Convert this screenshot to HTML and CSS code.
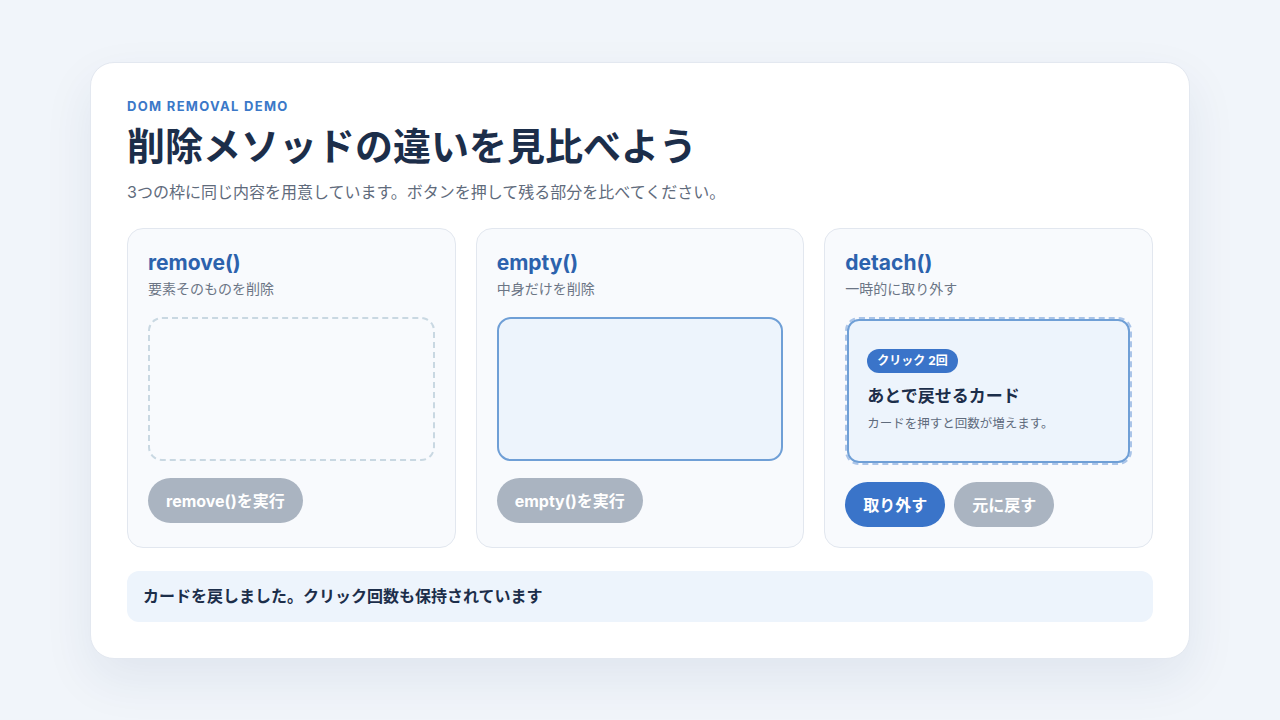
FILE: index.html
```html
<!DOCTYPE html>
<html lang="ja">
<head>
    <meta charset="UTF-8">
    <meta name="viewport" content="width=device-width, initial-scale=1.0">
    <title>DOM Removal Demo</title>
    <link rel="stylesheet" href="styles.css">
</head>
<body>
    <div class="panel">
        <p class="eyebrow">DOM REMOVAL DEMO</p>
        <h1>削除メソッドの違いを見比べよう</h1>
        <p class="lead">3つの枠に同じ内容を用意しています。ボタンを押して残る部分を比べてください。</p>

        <div class="methods">
            <div class="method">
                <h2>remove()</h2>
                <p class="method-desc">要素そのものを削除</p>
                <div class="slot slot-removed"></div>
                <div class="actions">
                    <button class="btn btn-off">remove()を実行</button>
                </div>
            </div>

            <div class="method">
                <h2>empty()</h2>
                <p class="method-desc">中身だけを削除</p>
                <div class="slot slot-emptied"></div>
                <div class="actions">
                    <button class="btn btn-off">empty()を実行</button>
                </div>
            </div>

            <div class="method">
                <h2>detach()</h2>
                <p class="method-desc">一時的に取り外す</p>
                <div class="slot slot-holder">
                    <div class="demo-card">
                        <span class="badge">クリック 2回</span>
                        <h3>あとで戻せるカード</h3>
                        <p>カードを押すと回数が増えます。</p>
                    </div>
                </div>
                <div class="actions">
                    <button class="btn btn-primary">取り外す</button>
                    <button class="btn btn-off">元に戻す</button>
                </div>
            </div>
        </div>

        <div class="status">カードを戻しました。クリック回数も保持されています</div>
    </div>
</body>
</html>
```

FILE: styles.css
```css
* { box-sizing: border-box; }

body {
    margin: 0;
    min-height: 100vh;
    display: flex;
    align-items: center;
    justify-content: center;
    background: #f1f5fa;
    font-family: Inter, "Noto Sans CJK JP", sans-serif;
    color: #1c2e4a;
}

.panel {
    width: 1100px;
    background: #fff;
    border: 1px solid #e3e8f0;
    border-radius: 24px;
    padding: 35px 36px 36px;
    box-shadow: 0 20px 50px rgba(30, 55, 100, 0.08);
}

.eyebrow {
    margin: 0;
    font-size: 13px;
    line-height: 16px;
    font-weight: 700;
    letter-spacing: 0.1em;
    color: #3b78c8;
}

h1 {
    margin: 8px 0 0;
    font-size: 38px;
    line-height: 49px;
    font-weight: 700;
    color: #1c2e4a;
}

.lead {
    margin: 10px 0 0;
    font-size: 16px;
    line-height: 22px;
    color: #5f6b7c;
}

.methods {
    margin-top: 25px;
    display: grid;
    grid-template-columns: repeat(3, 1fr);
    gap: 20px;
}

.method {
    background: #f8fafd;
    border: 1px solid #e2e7ef;
    border-radius: 16px;
    padding: 22px 20px 20px;
}

.method h2 {
    margin: 0;
    font-size: 21px;
    line-height: 24px;
    font-weight: 700;
    color: #2c62ad;
}

.method-desc {
    margin: 4px 0 0;
    font-size: 14px;
    line-height: 20px;
    color: #6b7585;
}

.slot {
    margin-top: 18px;
    min-height: 144px;
    border-radius: 14px;
}
.slot-removed { border: 2px dashed #c9d8e2; }
.slot-emptied { border: 2px solid #6f9fd6; background: #edf4fc; }
.slot-holder { border: 2px dashed #aac4e8; }

.demo-card {
    background: #edf4fc;
    border: 2px solid #6f9fd6;
    border-radius: 12px;
    padding: 28px 18px 29px;
}

.badge {
    display: inline-block;
    padding: 0 10px;
    height: 24px;
    line-height: 24px;
    border-radius: 12px;
    background: #3a74c9;
    color: #fff;
    font-size: 12px;
    font-weight: 700;
}

.demo-card h3 {
    margin: 12px 0 0;
    font-size: 17px;
    line-height: 22px;
    font-weight: 700;
    color: #1c2e4a;
}

.demo-card p {
    margin: 8px 0 0;
    font-size: 12.5px;
    line-height: 17px;
    color: #5f6b7c;
}

.actions {
    margin-top: 17px;
    display: flex;
    gap: 9px;
}

.btn {
    height: 45px;
    padding: 0 18px;
    border: none;
    border-radius: 23px;
    font-family: inherit;
    font-size: 16px;
    font-weight: 700;
    color: #fff;
    cursor: pointer;
}
.btn-off { background: #aab4c1; }
.btn-primary { background: #3a74c9; }

.status {
    margin-top: 23px;
    background: #edf4fc;
    border-radius: 12px;
    padding: 15px 16px 16px;
    font-size: 16px;
    line-height: 20px;
    font-weight: 700;
    color: #1c2e4a;
}
```
